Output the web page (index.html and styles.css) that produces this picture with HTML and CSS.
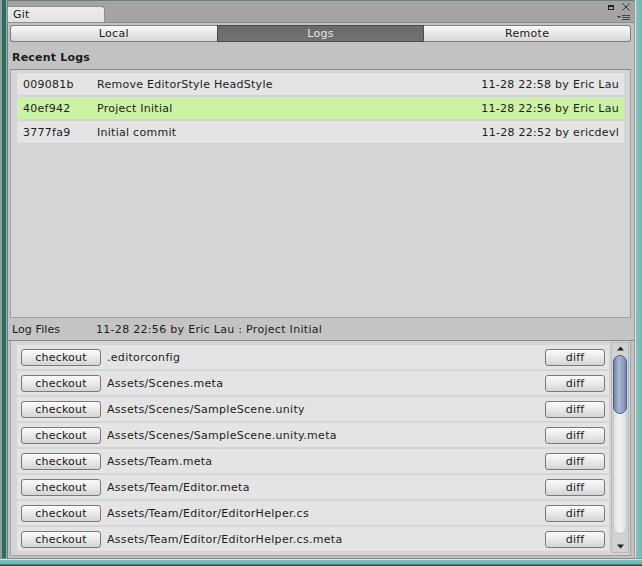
FILE: index.html
```html
<!DOCTYPE html>
<html>
<head>
<meta charset="utf-8">
<link rel="stylesheet" href="styles.css">
</head>
<body>
<div class="window">
  <div class="body-row">
    <div class="edge-l"></div>
    <div class="panel">
      <div class="tabbar">
        <div class="tab">Git</div>
        <div class="win-icons">
          <div class="icons-top">
            <svg width="6" height="5" viewBox="0 0 6 5"><rect x="0.5" y="0.5" width="5" height="4" fill="none" stroke="#222" stroke-width="1"/><rect x="0" y="0" width="6" height="2" fill="#222"/></svg>
            <svg width="8" height="8" viewBox="0 0 8 8"><path d="M0.5 0.5 L7.5 7.5 M7.5 0.5 L0.5 7.5" stroke="#333" stroke-width="1"/></svg>
          </div>
          <svg class="menu-ic" width="13" height="6" viewBox="0 0 13 6"><path d="M0 1 L4 1 L2 3 Z" fill="#333"/><rect x="5" y="0" width="8" height="1" fill="#444"/><rect x="5" y="2" width="8" height="1" fill="#444"/><rect x="5" y="4" width="8" height="1" fill="#444"/></svg>
        </div>
      </div>
      <div class="toolbar">
        <div class="seg first">Local</div>
        <div class="seg active">Logs</div>
        <div class="seg last">Remote</div>
      </div>
      <div class="section-title">Recent Logs</div>
      <div class="logbox">
        <div class="logrow"><span class="hash">009081b</span><span class="msg">Remove EditorStyle HeadStyle</span><span class="date">11-28 22:58 by Eric Lau</span></div>
        <div class="logrow selected"><span class="hash">40ef942</span><span class="msg">Project Initial</span><span class="date">11-28 22:56 by Eric Lau</span></div>
        <div class="logrow"><span class="hash">3777fa9</span><span class="msg">Initial commit</span><span class="date">11-28 22:52 by ericdevl</span></div>
      </div>
      <div class="filesbar"><span class="fb-label">Log Files</span><span class="fb-info">11-28 22:56 by Eric Lau : Project Initial</span></div>
      <div class="filebox">
        <div class="filelist">
          <div class="filerow"><span class="btn checkout">checkout</span><span class="fname">.editorconfig</span><span class="btn diff">diff</span></div>
          <div class="filerow"><span class="btn checkout">checkout</span><span class="fname">Assets/Scenes.meta</span><span class="btn diff">diff</span></div>
          <div class="filerow"><span class="btn checkout">checkout</span><span class="fname">Assets/Scenes/SampleScene.unity</span><span class="btn diff">diff</span></div>
          <div class="filerow"><span class="btn checkout">checkout</span><span class="fname">Assets/Scenes/SampleScene.unity.meta</span><span class="btn diff">diff</span></div>
          <div class="filerow"><span class="btn checkout">checkout</span><span class="fname">Assets/Team.meta</span><span class="btn diff">diff</span></div>
          <div class="filerow"><span class="btn checkout">checkout</span><span class="fname">Assets/Team/Editor.meta</span><span class="btn diff">diff</span></div>
          <div class="filerow"><span class="btn checkout">checkout</span><span class="fname">Assets/Team/Editor/EditorHelper.cs</span><span class="btn diff">diff</span></div>
          <div class="filerow"><span class="btn checkout">checkout</span><span class="fname">Assets/Team/Editor/EditorHelper.cs.meta</span><span class="btn diff">diff</span></div>
        </div>
        <div class="scrollbar">
          <svg class="arrow" width="7" height="5" viewBox="0 0 7 5"><path d="M0 4.5 L3.5 0.5 L7 4.5 Z" fill="#222"/></svg>
          <div class="track"><div class="thumb"></div></div>
          <svg class="arrow" width="7" height="5" viewBox="0 0 7 5"><path d="M0 0.5 L3.5 4.5 L7 0.5 Z" fill="#222"/></svg>
        </div>
      </div>
    </div>
    <div class="edge-r"></div>
  </div>
  <div class="edge-b"></div>
</div>
</body>
</html>
```

FILE: styles.css
```css
* { box-sizing: border-box; }
html, body { margin: 0; padding: 0; }
body {
  width: 642px;
  height: 566px;
  overflow: hidden;
  font-family: "DejaVu Sans", Verdana, sans-serif;
  font-size: 11px;
  color: #1c1c1c;
}
.window {
  width: 642px;
  height: 566px;
  display: flex;
  flex-direction: column;
}
.body-row {
  display: flex;
  height: 558px;
}
.edge-l {
  width: 8px;
  background: linear-gradient(to right, #86a39c 0, #86a39c 2px, #2f6a61 2px, #2f6a61 6px, #8fb1aa 6px, #8fb1aa 7px, #7a7a7a 7px);
}
.edge-r {
  width: 8px;
  background: linear-gradient(to right, #9a9a9a 0, #9a9a9a 1px, #d8e8e6 1px, #d8e8e6 2px, #7dc3c0 2px, #72bcb8 100%);
}
.edge-b {
  height: 8px;
  background: linear-gradient(to bottom, #8a8a8a 0, #8a8a8a 1px, #d0e6e4 1px, #d0e6e4 2px, #7cc2be 2px, #6cb6b2 6px, #2e4a48 7px);
}
.panel {
  flex: 1;
  display: flex;
  flex-direction: column;
  background: #c2c2c2;
  min-width: 0;
}
.tabbar {
  height: 23px;
  background: #a4a4a4;
  border-top: 1px solid #6f7d7a;
  border-bottom: 1px solid #8c8c8c;
  display: flex;
  align-items: flex-end;
  justify-content: space-between;
}
.tab {
  width: 98px;
  height: 16px;
  margin-left: -1px;
  background: linear-gradient(#ececec, #e2e2e2);
  border: 1px solid #8e8e8e;
  border-bottom: none;
  border-radius: 1px 4px 0 0;
  padding-left: 5px;
  line-height: 15px;
  color: #1a1a1a;
  letter-spacing: 0.2px;
}
.win-icons {
  display: flex;
  flex-direction: column;
  align-items: flex-end;
  gap: 4px;
  margin-right: 4px;
  align-self: flex-start;
  padding-top: 2px;
}
.icons-top {
  display: flex;
  align-items: center;
  gap: 8px;
}
.toolbar {
  display: flex;
  margin: 2px 3px 0 2px;
  height: 17px;
}
.seg {
  flex: 1;
  text-align: center;
  line-height: 15px;
  background: linear-gradient(#fafafa, #e8e8e8 50%, #d6d6d6);
  border: 1px solid #7e7e7e;
  color: #1a1a1a;
  letter-spacing: 0.3px;
}
.seg.first { border-radius: 3px 0 0 3px; border-right: none; }
.seg.last { border-radius: 0 3px 3px 0; border-left: none; }
.seg.active {
  background: linear-gradient(#6a6a6a, #727272);
  border-color: #4c4c4c;
  color: #e6e6e6;
}
.section-title {
  height: 27px;
  font-weight: bold;
  padding: 9px 0 0 4px;
  line-height: 13px;
  letter-spacing: 0.2px;
}
.logbox {
  height: 249px;
  margin: 0 3px 0 2px;
  background: #d5d5d5;
  border: 1px solid #a0a0a0;
  border-top-color: #8a8a8a;
  padding: 3px 6px;
  display: flex;
  flex-direction: column;
  gap: 2px;
}
.logrow {
  height: 22px;
  background: #e4e4e4;
  display: flex;
  align-items: center;
  padding: 1px 5px 0 6px;
  color: #1c1c1c;
  letter-spacing: 0.27px;
}
.logrow.selected { background: #ccf2a6; }
.hash { width: 74px; }
.msg { flex: 1; }
.filesbar {
  height: 23px;
  display: flex;
  align-items: center;
  padding: 1px 0 0 4px;
  background: #c4c4c4;
  border-bottom: 1px solid #8a8a8a;
}
.fb-label { width: 84px; letter-spacing: 0.1px; }
.fb-info { letter-spacing: 0.3px; }
.filebox {
  height: 215px;
  margin: 0 3px 0 2px;
  background: #d5d5d5;
  border: 1px solid #a0a0a0;
  border-top: none;
  display: flex;
  overflow: hidden;
}
.filelist {
  flex: 1;
  padding: 4px 2px 0 6px;
  display: flex;
  flex-direction: column;
  gap: 2px;
  overflow: hidden;
}
.filerow {
  height: 24px;
  flex: none;
  background: #e4e4e4;
  display: flex;
  align-items: center;
  padding: 0 4px;
}
.btn {
  height: 17px;
  line-height: 16px;
  text-align: center;
  background: linear-gradient(#fbfbfb, #e9e9e9 50%, #d4d4d4);
  border: 1px solid #7a7a7a;
  border-radius: 3px;
  color: #1a1a1a;
  flex: none;
  letter-spacing: 0.2px;
}
.checkout { width: 80px; }
.diff { width: 60px; }
.fname { flex: 1; padding-left: 6px; letter-spacing: 0.3px; }
.scrollbar {
  width: 18px;
  margin: 1px 1px 2px 0;
  background: #d2d2d2;
  border: 1px solid #b8b8b8;
  display: flex;
  flex-direction: column;
  align-items: center;
  padding: 3px 0 3px;
}
.arrow { flex: none; }
.track {
  flex: 1;
  width: 14px;
  margin: 4px 0 10px;
  background: linear-gradient(to right, #e2e2e2, #f2f2f2 50%, #e0e0e0);
  border-radius: 7px;
  border: 1px solid #c8c8c8;
}
.thumb {
  height: 59px;
  margin: -1px -1px 0;
  border-radius: 7px;
  background: linear-gradient(to right, #6f83a8, #a7b6d2 40%, #8a9cbf 80%, #6e81a6);
  border: 1px solid #4f6389;
}
```
